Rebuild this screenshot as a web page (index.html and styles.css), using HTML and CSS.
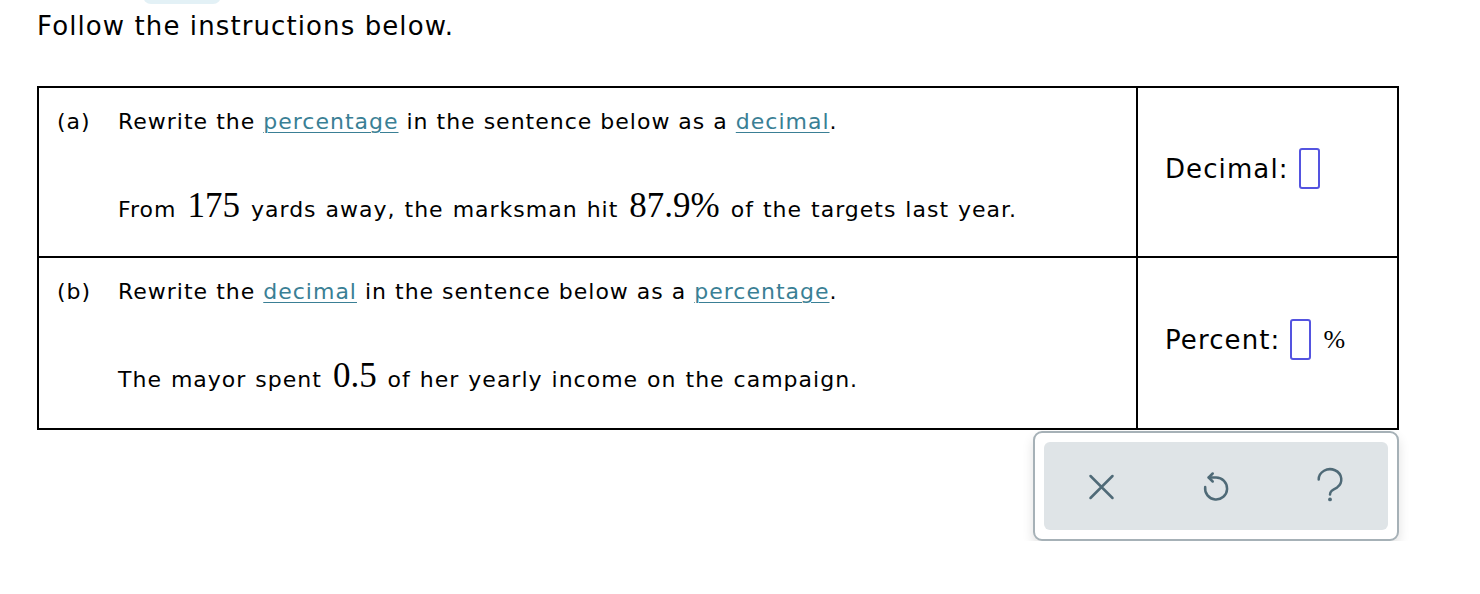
FILE: index.html
```html
<!DOCTYPE html>
<html>
<head>
<meta charset="utf-8">
<link rel="stylesheet" href="styles.css">
</head>
<body>
<div class="page">
  <div class="tab-hint"></div>
  <p class="intro">Follow the instructions below.</p>
  <table class="qtable">
    <tr>
      <td class="qcell">
        <div class="qline">
          <span class="qlabel">(a)</span>
          <span>Rewrite the <a class="term">percentage</a> in the sentence below as a <a class="term">decimal</a>.</span>
        </div>
        <div class="sentence">From <span class="math">175</span> yards away, the marksman hit <span class="math">87.9%</span> of the targets last year.</div>
      </td>
      <td class="acell">
        <div class="answer">Decimal: <span class="box"></span></div>
      </td>
    </tr>
    <tr>
      <td class="qcell">
        <div class="qline">
          <span class="qlabel">(b)</span>
          <span>Rewrite the <a class="term">decimal</a> in the sentence below as a <a class="term">percentage</a>.</span>
        </div>
        <div class="sentence">The mayor spent <span class="math">0.5</span> of her yearly income on the campaign.</div>
      </td>
      <td class="acell">
        <div class="answer">Percent: <span class="box"></span> <span class="pct">%</span></div>
      </td>
    </tr>
  </table>
  <div class="toolbar-row">
    <div class="toolbar">
      <div class="toolbar-inner">
        <button class="tbtn" aria-label="Clear">
          <svg width="40" height="40" viewBox="0 0 40 40"><path d="M9.5 10 L31.5 32 M31.5 10 L9.5 32" stroke="#4f6a77" stroke-width="2.5" stroke-linecap="round" fill="none"/></svg>
        </button>
        <button class="tbtn" aria-label="Undo">
          <svg width="40" height="40" viewBox="0 0 40 40"><path d="M12.7 11.5 H20 A11 11 0 1 1 9.2 21" stroke="#4f6a77" stroke-width="2.5" stroke-linecap="round" fill="none"/><path d="M16.7 7.5 L12.7 11.5 L16.7 15.5" stroke="#4f6a77" stroke-width="2.5" stroke-linecap="round" stroke-linejoin="round" fill="none"/></svg>
        </button>
        <button class="tbtn" aria-label="Help">
          <svg width="40" height="40" viewBox="0 0 40 40"><path d="M8.7 13.5 A11.3 10.3 0 1 1 27 21.6 C22 24.2 20 25.5 20 28.6" stroke="#4f6a77" stroke-width="2.5" stroke-linecap="round" fill="none"/><circle cx="20" cy="33.4" r="1.9" fill="#4f6a77"/></svg>
        </button>
      </div>
    </div>
  </div>
</div>
</body>
</html>
```
FILE: styles.css
```css
html, body {
  margin: 0;
  padding: 0;
  background: #ffffff;
}
body {
  font-family: "DejaVu Sans", Verdana, sans-serif;
  color: #000;
}
.page {
  position: relative;
  padding: 0 0 0 37px;
  width: 1362px;
}
.tab-hint {
  position: absolute;
  left: 143px;
  top: -12px;
  width: 78px;
  height: 16px;
  border-radius: 8px;
  background: #e3f1f6;
}
.intro {
  margin: 0;
  padding-top: 10px;
  font-size: 26px;
  letter-spacing: 1.1px;
  line-height: 32px;
  box-sizing: border-box;
  height: 86px;
}
.qtable {
  border-collapse: collapse;
  width: 1362px;
}
.qtable td {
  border: 2px solid #000;
  vertical-align: top;
  padding: 0;
}
.qcell {
  width: 1097px;
  height: 168px;
  font-size: 22px;
  letter-spacing: 1px;
}
.qtable tr + tr .qcell {
  height: 170px;
}
.qline {
  display: flex;
  padding: 20px 0 0 18px;
  line-height: 28px;
}
.qlabel {
  width: 61px;
  flex: none;
}
.term {
  color: #3a7f95;
  text-decoration: underline;
  text-underline-offset: 3px;
  text-decoration-thickness: 1px;
}
.sentence {
  padding: 52px 0 0 79px;
  line-height: 36px;
  word-spacing: 1px;
}
.math {
  font-family: "Liberation Serif", "Times New Roman", serif;
  font-size: 35px;
  letter-spacing: 0;
  margin: 0 2px;
}
.acell {
  vertical-align: middle !important;
}
.answer {
  display: flex;
  align-items: center;
  font-size: 26px;
  letter-spacing: 1.1px;
  padding-left: 27px;
  margin-top: -7px;
}
.box {
  display: inline-block;
  width: 17px;
  height: 37px;
  border: 2px solid #5454e0;
  border-radius: 3px;
  margin-left: 10px;
}
.pct {
  font-family: "Liberation Serif", "Times New Roman", serif;
  font-size: 26px;
  letter-spacing: 0;
  margin-left: 12px;
}
.toolbar-row {
  display: flex;
  justify-content: flex-end;
  margin-top: 1px;
}
.toolbar {
  width: 366px;
  height: 110px;
  box-sizing: border-box;
  border: 2px solid #a6b1b7;
  border-radius: 9px;
  background: #fff;
  padding: 9px;
  box-shadow: 0 6px 12px rgba(0,0,0,0.12);
}
.toolbar-inner {
  height: 100%;
  border-radius: 6px;
  background: #dfe4e7;
  display: flex;
  align-items: center;
  justify-content: space-between;
  padding: 0 38px 0 37px;
}
.tbtn {
  border: none;
  background: transparent;
  padding: 0;
  margin: 0;
  display: flex;
  align-items: center;
  justify-content: center;
  width: 40px;
  height: 40px;
}
```
